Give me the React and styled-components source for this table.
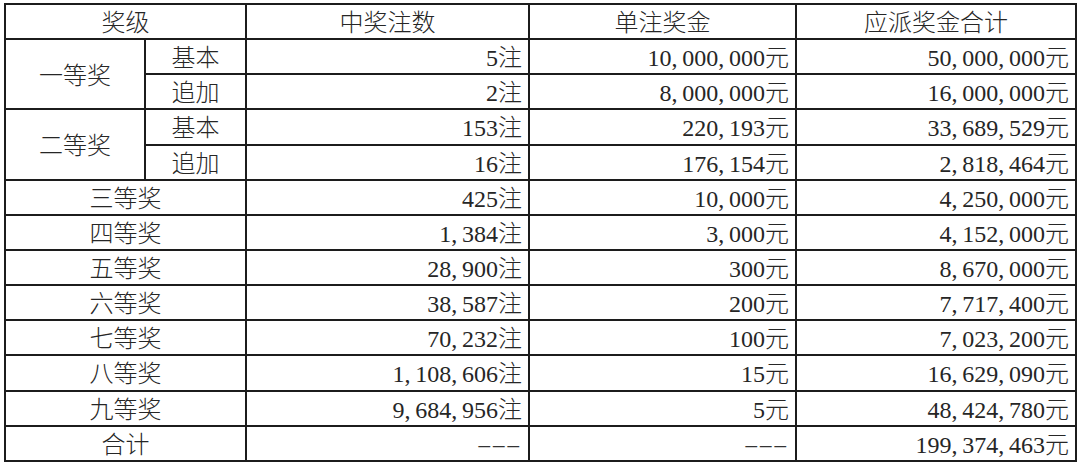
import React from 'react'
import styled, { createGlobalStyle } from 'styled-components'

const GlobalStyle = createGlobalStyle`
    html, body {
        margin     : 0;
        padding    : 0;
        background : #fff;
    }
`

const rows = [
    { group: '一等奖', sub: '基本', span: 2, count: '5注', unit: '10,000,000元', total: '50,000,000元' },
    { sub: '追加', count: '2注', unit: '8,000,000元', total: '16,000,000元' },
    { group: '二等奖', sub: '基本', span: 2, count: '153注', unit: '220,193元', total: '33,689,529元' },
    { sub: '追加', count: '16注', unit: '176,154元', total: '2,818,464元' },
    { level: '三等奖', count: '425注', unit: '10,000元', total: '4,250,000元' },
    { level: '四等奖', count: '1,384注', unit: '3,000元', total: '4,152,000元' },
    { level: '五等奖', count: '28,900注', unit: '300元', total: '8,670,000元' },
    { level: '六等奖', count: '38,587注', unit: '200元', total: '7,717,400元' },
    { level: '七等奖', count: '70,232注', unit: '100元', total: '7,023,200元' },
    { level: '八等奖', count: '1,108,606注', unit: '15元', total: '16,629,090元' },
    { level: '九等奖', count: '9,684,956注', unit: '5元', total: '48,424,780元' },
    { level: '合计', count: '---', unit: '---', total: '199,374,463元' },
]

// commas in the source are set half-width like the digits
const Amount = ({ value }) => {
    if (value === '---') return <Dashes>–––</Dashes>
    const parts = value.split(',')
    return (
        <>
            {parts.map((p, i) => (
                <React.Fragment key={i}>
                    {i > 0 && <Comma>,</Comma>}
                    {p}
                </React.Fragment>
            ))}
        </>
    )
}

const App = () => {
    return (
        <Page>
            <GlobalStyle />
            <Table>
                <colgroup>
                    <col style={{ width: 140 }} />
                    <col style={{ width: 101 }} />
                    <col style={{ width: 283 }} />
                    <col style={{ width: 267 }} />
                    <col style={{ width: 280 }} />
                </colgroup>
                <thead>
                    <tr>
                        <Cell as="th" colSpan={2}>奖级</Cell>
                        <Cell as="th">中奖注数</Cell>
                        <Cell as="th">单注奖金</Cell>
                        <Cell as="th">应派奖金合计</Cell>
                    </tr>
                </thead>
                <tbody>
                    {rows.map((r, i) => (
                        <tr key={i}>
                            {r.group && <Cell rowSpan={r.span}>{r.group}</Cell>}
                            {r.sub && <Cell>{r.sub}</Cell>}
                            {r.level && <Cell colSpan={2}>{r.level}</Cell>}
                            <Cell $right><Amount value={r.count} /></Cell>
                            <Cell $right><Amount value={r.unit} /></Cell>
                            <Cell $right><Amount value={r.total} /></Cell>
                        </tr>
                    ))}
                </tbody>
            </Table>
        </Page>
    )
}

export default App

const Page = styled.div`
    padding : 3px 4px;
`

const Table = styled.table`
    width           : 1072px;
    border-collapse : collapse;
    table-layout    : fixed;
    font-family     : "Liberation Serif", "Noto Sans CJK SC", serif;
    font-size       : 24px;
    font-weight     : 300;
    color           : #262626;

    tr {
        height : 35.15px;
    }
`

const Cell = styled.td`
    border         : 2px solid #1c1c1c;
    padding        : 3px 6px 0;
    text-align     : ${p => p.$right ? 'right' : 'center'};
    font-weight    : 300;
    line-height    : 28px;
    white-space    : nowrap;
    vertical-align : middle;
`

const Comma = styled.span`
    display    : inline-block;
    width      : 0.45em;
    text-align : left;
`

const Dashes = styled.span`
    letter-spacing : 3px;
    color          : #333;
    font-size      : 23px;
`
